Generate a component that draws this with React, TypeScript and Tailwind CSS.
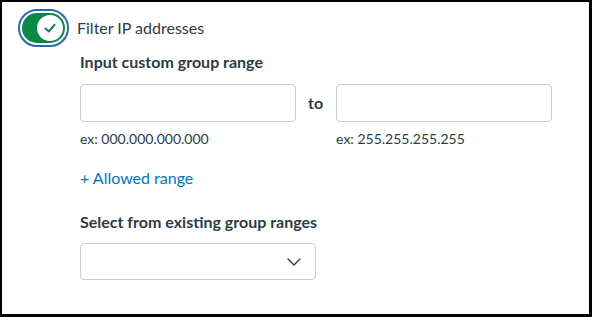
import React from 'react'

function Toggle() {
  return (
    <div className="flex h-[38px] w-[51px] items-center rounded-full border-2 border-[#2b6aa8] p-[2px]">
      <div className="flex h-full w-full items-center justify-end rounded-full bg-[#0b874b] pr-[2px]">
        <div className="flex h-[26px] w-[26px] items-center justify-center rounded-full bg-white">
          <svg width="16" height="16" viewBox="0 0 16 16" fill="none">
            <path d="M3.5 8.5 L6.8 11.5 L12.5 4.8" stroke="#0b874b" strokeWidth="2" strokeLinecap="round" strokeLinejoin="round" />
          </svg>
        </div>
      </div>
    </div>
  )
}

function TextInput() {
  return <input className="h-[38px] w-[216px] rounded border border-[#c7cdd1] bg-white px-3 outline-none" />
}

export default function App() {
  return (
    <div className="box-border h-[317px] w-[592px] border-t-2 border-l-2 border-r-[3px] border-b-[3px] border-black bg-white font-['Lato','Noto_Sans',sans-serif] text-[#2d3b45]">
      <div className="pl-4 pt-[7px]">
        <div className="flex items-center gap-2">
          <Toggle />
          <span className="text-base">Filter IP addresses</span>
        </div>

        <div className="pl-[62px]">
          <h3 className="mt-[3px] text-base leading-6 font-bold">Input custom group range</h3>

          <div className="mt-[10px] flex items-start">
            <div className="flex flex-col">
              <TextInput />
              <span className="mt-[7px] text-sm leading-5">ex: 000.000.000.000</span>
            </div>
            <span className="ml-3 mr-[13px] mt-[7px] text-base leading-6 font-bold">to</span>
            <div className="flex flex-col">
              <TextInput />
              <span className="mt-[7px] text-sm leading-5">ex: 255.255.255.255</span>
            </div>
          </div>

          <div className="mt-[17px] text-base leading-6 text-[#0374b5]">+ Allowed range</div>

          <h3 className="mt-[20px] text-base leading-6 font-bold">Select from existing group ranges</h3>

          <div className="mt-[9px] flex h-[37px] w-[236px] items-center justify-end rounded border border-[#c7cdd1] pr-[14px]">
            <svg width="14" height="8" viewBox="0 0 14 8" fill="none">
              <path d="M1 1 L7 7 L13 1" stroke="#2d3b45" strokeWidth="1.4" strokeLinecap="round" strokeLinejoin="round" />
            </svg>
          </div>
        </div>
      </div>
    </div>
  )
}
